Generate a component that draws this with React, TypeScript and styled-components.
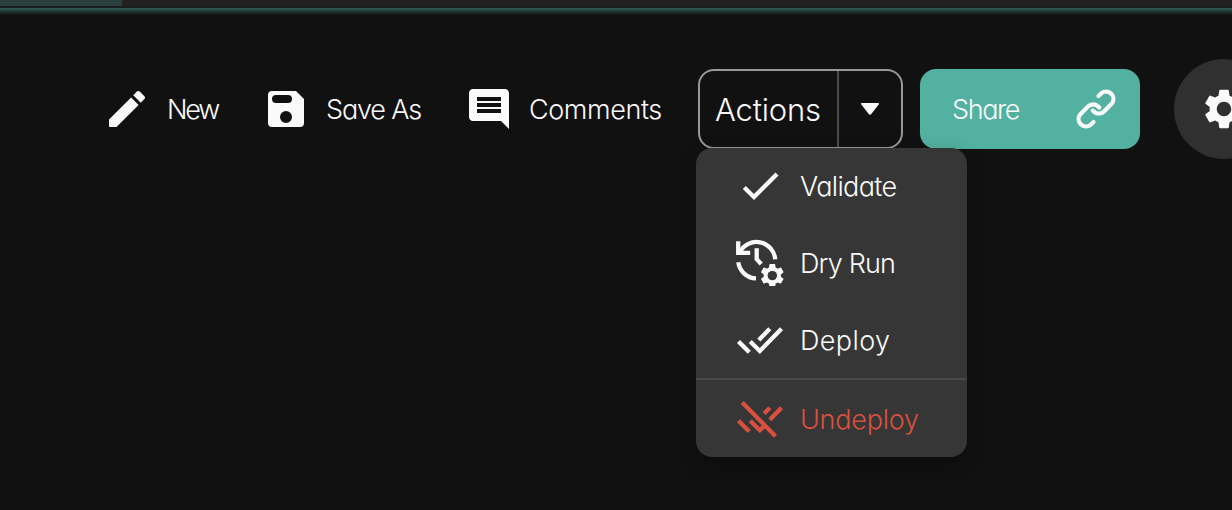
import React from "react";
import styled, { createGlobalStyle } from "styled-components";

const GlobalStyle = createGlobalStyle`
  * { box-sizing: border-box; }
  body {
    margin: 0;
    background: #111111;
    overflow: hidden;
    font-family: Inter, "Liberation Sans", sans-serif;
    font-weight: 300;
    font-feature-settings: "cv11" 1;
    color: #fafafa;
  }
`;

const Page = styled.div`
  width: 1232px;
  height: 510px;
  overflow: hidden;
`;

const TabStrip = styled.div`
  height: 8px;
  background: #202020;
  border-bottom: 2px solid #181f1e;
`;

const ActiveTab = styled.div`
  width: 122px;
  height: 6px;
  background: #2b3f3f;
`;

const GlowLine = styled.div`
  height: 7px;
  background: linear-gradient(#2f5a51 0 1px, #27443e 2px, #1c302c 4px, #111111 7px);
`;

const Toolbar = styled.div`
  display: flex;
  align-items: center;
  height: 100px;
  margin-top: 44px;
  padding-left: 103px;
`;

const ToolButton = styled.button<{ $width: number; $gap: number }>`
  display: flex;
  flex: none;
  align-items: center;
  gap: ${(p) => p.$gap}px;
  width: ${(p) => p.$width}px;
  padding: 0;
  border: 0;
  background: none;
  color: inherit;
  font: inherit;
  font-feature-settings: inherit;
`;

const Label = styled.span<{ $size?: number; $spacing?: number }>`
  padding-top: 2px;
  font-size: ${(p) => p.$size ?? 27}px;
  line-height: 36px;
  letter-spacing: ${(p) => p.$spacing ?? 0}px;
  white-space: nowrap;
`;

const MenuLabel = styled(Label)`
  padding-top: 4px;
`;

const Icon = styled.svg<{ $size?: number }>`
  display: block;
  flex: none;
  width: ${(p) => p.$size ?? 48}px;
  height: ${(p) => p.$size ?? 48}px;
`;

const SplitAnchor = styled.div`
  position: relative;
  flex: none;
  width: 205px;
  height: 80px;
`;

const SplitButton = styled.div`
  display: flex;
  height: 80px;
  border: 2px solid #989898;
  border-radius: 16px;
`;

const SplitMain = styled.div`
  display: flex;
  align-items: center;
  width: 139px;
  padding-left: 15px;
  border-right: 2px solid #4d4d4d;
`;

const SplitToggle = styled.div`
  display: flex;
  flex: 1;
  align-items: center;
  justify-content: center;
`;

const ShareButton = styled.button`
  display: flex;
  flex: none;
  align-items: center;
  justify-content: space-between;
  width: 220px;
  height: 80px;
  margin-left: 17px;
  padding: 0 20px 0 32px;
  border: 0;
  border-radius: 16px;
  background: #52b1a0;
  color: #fafafa;
  font: inherit;
  font-feature-settings: inherit;
`;

const RoundButton = styled.button`
  display: flex;
  flex: none;
  align-items: center;
  justify-content: center;
  width: 100px;
  height: 100px;
  margin-left: 34px;
  padding: 0;
  border: 0;
  border-radius: 50%;
  background: #303030;
  color: #fafafa;
`;

const Menu = styled.div`
  position: absolute;
  z-index: 1;
  top: 79px;
  left: -2px;
  width: 271px;
  height: 309px;
  border-radius: 16px;
  background: #363636;
  box-shadow: 0 8px 20px rgba(0, 0, 0, 0.3);
`;

const MenuGroup = styled.div`
  display: flex;
  flex-direction: column;
  justify-content: flex-end;
  height: 230px;
`;

const MenuItem = styled.div<{ $danger?: boolean }>`
  display: flex;
  flex: none;
  align-items: center;
  gap: 16px;
  height: 77px;
  padding: 0 0 1px 40px;
  color: ${(p) => (p.$danger ? "#d9503f" : "#fafafa")};
`;

const MenuDivider = styled.div`
  height: 2px;
  background: #484a4c;
`;

const gearPath =
  "M19.14 12.94c.04-.3.06-.61.06-.94 0-.32-.02-.64-.07-.94l2.03-1.58c.18-.14.23-.41.12-.61l-1.92-3.32c-.12-.22-.37-.29-.59-.22l-2.39.96c-.5-.38-1.03-.7-1.62-.94l-.36-2.54c-.04-.24-.24-.41-.48-.41h-3.84c-.24 0-.43.17-.47.41l-.36 2.54c-.59.24-1.13.57-1.62.94l-2.39-.96c-.22-.08-.47 0-.59.22L2.74 8.87c-.12.21-.08.47.12.61l2.03 1.58c-.05.3-.09.63-.09.94s.02.64.07.94l-2.03 1.58c-.18.14-.23.41-.12.61l1.92 3.32c.12.22.37.29.59.22l2.39-.96c.5.38 1.03.7 1.62.94l.36 2.54c.05.24.24.41.48.41h3.84c.24 0 .44-.17.47-.41l.36-2.54c.59-.24 1.13-.56 1.62-.94l2.39.96c.22.08.47 0 .59-.22l1.92-3.32c.12-.22.07-.47-.12-.61l-2.01-1.58zM12 15.6c-1.98 0-3.6-1.62-3.6-3.6s1.62-3.6 3.6-3.6 3.6 1.62 3.6 3.6-1.62 3.6-3.6 3.6z";

const LineIcon = ({ children }: { children: React.ReactNode }) => (
  <Icon viewBox="0 0 48 48" fill="none" stroke="currentColor" strokeWidth="4.3">
    {children}
  </Icon>
);

export default function App() {
  return (
    <Page>
      <GlobalStyle />
      <TabStrip>
        <ActiveTab />
      </TabStrip>
      <GlowLine />
      <Toolbar>
        <ToolButton $width={159} $gap={16}>
          <Icon viewBox="0 0 24 24" fill="currentColor">
            <path d="M3 17.25V20.5a.5.5 0 0 0 .5.5h3.25L17.81 9.94l-3.75-3.75L3 17.25zM20.71 7.04c.39-.39.39-1.02 0-1.41l-2.34-2.34c-.39-.39-1.02-.39-1.41 0l-1.83 1.83 3.75 3.75 1.83-1.83z" />
          </Icon>
          <Label $spacing={-2.2}>New</Label>
        </ToolButton>
        <ToolButton $width={203} $gap={16}>
          <Icon viewBox="0 0 48 48">
            <path
              fill="currentColor"
              fillRule="evenodd"
              d="M10 6h24l8 8v24a4 4 0 0 1-4 4H10a4 4 0 0 1-4-4V10a4 4 0 0 1 4-4zm4 4a4 4 0 0 0 0 8h12a4 4 0 0 0 0-8zm10 16a6 6 0 1 0 0 12a6 6 0 0 0 0-12z"
            />
          </Icon>
          <Label $spacing={-1.15}>Save As</Label>
        </ToolButton>
        <ToolButton $width={233} $gap={16}>
          <Icon viewBox="0 0 24 24" fill="currentColor">
            <path d="M21.99 4c0-1.1-.89-2-1.99-2H4c-1.1 0-2 .9-2 2v12c0 1.1.9 2 2 2h14l4 4-.01-18zM18 14H6v-2h12v2zm0-3H6V9h12v2zm0-3H6V6h12v2z" />
          </Icon>
          <Label $spacing={-0.4}>Comments</Label>
        </ToolButton>
        <SplitAnchor>
          <SplitButton>
            <SplitMain>
              <Label $size={31} $spacing={-0.2}>Actions</Label>
            </SplitMain>
            <SplitToggle>
              <Icon viewBox="0 0 48 48" fill="currentColor">
                <path d="M15.6 18h16.8q1.1.2.3 1.4l-7.4 9.6q-1.3 1.4-2.6 0l-7.4-9.6q-.8-1.2.3-1.4z" />
              </Icon>
            </SplitToggle>
          </SplitButton>
          <Menu>
            <MenuGroup>
              <MenuItem>
                <LineIcon>
                  <path d="M8.3 26.5L18 36L41 13" />
                </LineIcon>
                <MenuLabel $spacing={-0.65}>Validate</MenuLabel>
              </MenuItem>
              <MenuItem>
                <LineIcon>
                  <path d="M2.2 3.2V14.9H14.2" />
                  <path d="M3.8 14.3A18.7 18.7 0 0 1 39.2 21.4" />
                  <path d="M2.3 24.3A18.5 18.5 0 0 0 20 40.4" />
                  <path d="M20.7 10.3V21.2L25.2 26" />
                  <g transform="translate(36.3 37.6) scale(1.2) translate(-12 -12)" stroke="none">
                    <path fill="currentColor" d={gearPath} />
                    <circle cx="12" cy="12" r="3.9" fill="#363636" />
                  </g>
                </LineIcon>
                <MenuLabel $spacing={-0.85}>Dry Run</MenuLabel>
              </MenuItem>
              <MenuItem>
                <LineIcon>
                  <path d="M2.5 26.5L13.3 37.3M14.2 26.5L23.8 36L45.5 13.8M22.8 25L33.8 13.8" />
                </LineIcon>
                <MenuLabel $spacing={0.4}>Deploy</MenuLabel>
              </MenuItem>
            </MenuGroup>
            <MenuDivider />
            <MenuItem $danger>
              <LineIcon>
                <path d="M6.2 8.5L39.5 42.2M2.5 26.8L13.2 37.5M14.2 26.8L23.8 36.3L28.5 31.5M28.2 19.5L33.8 13.8M33.8 25.7L45.5 13.8" />
              </LineIcon>
              <MenuLabel $spacing={-0.25}>Undeploy</MenuLabel>
            </MenuItem>
          </Menu>
        </SplitAnchor>
        <ShareButton>
          <Label $spacing={-1.4}>Share</Label>
          <Icon
            viewBox="0 0 48 48"
            fill="none"
            stroke="currentColor"
            strokeWidth="4.2"
            strokeLinecap="round"
            strokeLinejoin="round"
          >
            <path d="M26.5 11L29.4 8.2A7.4 7.4 0 0 1 39.8 18.6L32 26.4A7.4 7.4 0 0 1 20.8 25.5" />
            <path d="M21.5 37L18.6 39.8A7.4 7.4 0 0 1 8.2 29.4L16 21.6A7.4 7.4 0 0 1 27.2 22.5" />
          </Icon>
        </ShareButton>
        <RoundButton>
          <Icon $size={48} viewBox="0 0 24 24" fill="currentColor">
            <path d={gearPath} />
          </Icon>
        </RoundButton>
      </Toolbar>
    </Page>
  );
}
